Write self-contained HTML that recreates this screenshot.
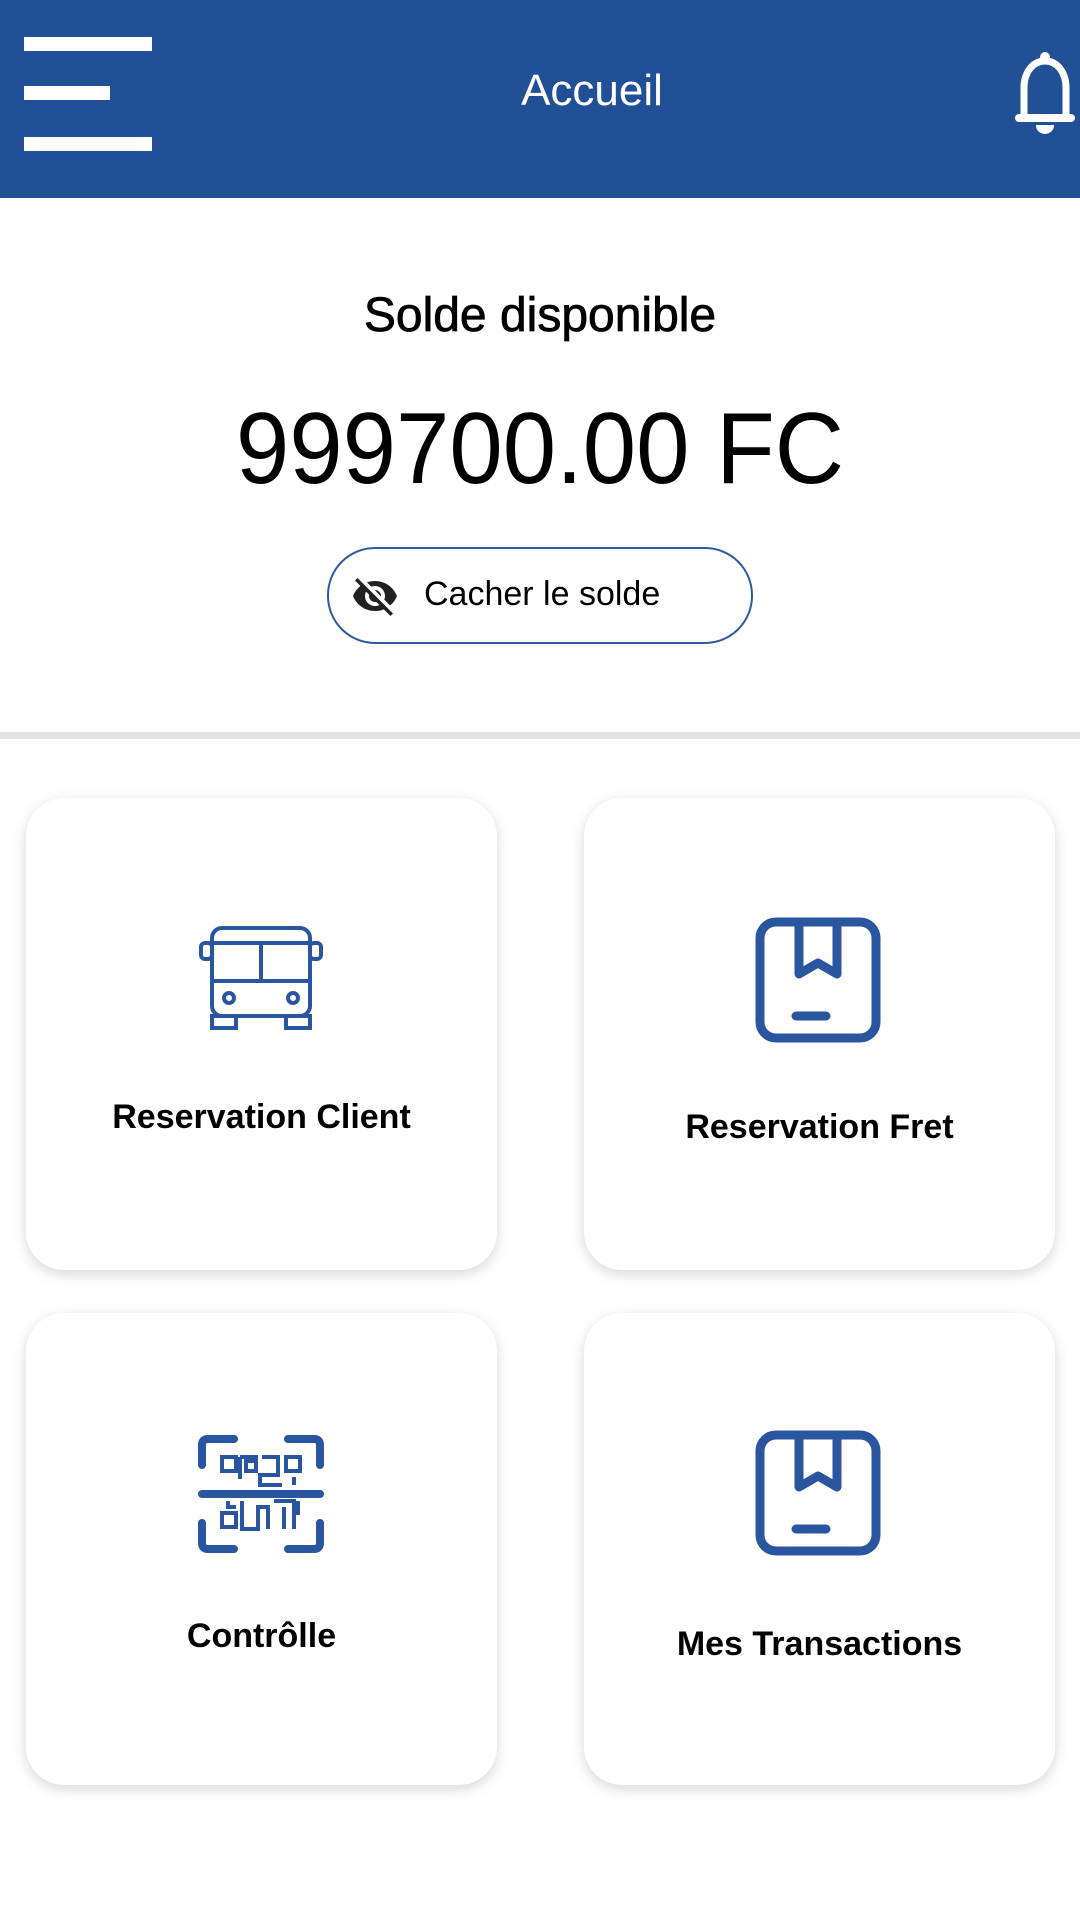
<!DOCTYPE html>
<html><head><meta charset="utf-8"><style>
*{margin:0;padding:0;box-sizing:border-box}
body{width:1080px;height:1920px;background:#fff;position:relative;overflow:hidden;font-family:"Liberation Sans",Roboto,sans-serif;color:#000}
.hdr{position:absolute;left:0;top:0;width:1080px;height:198px;background:#225096}
.bar{position:absolute;left:24px;height:14px;background:#fff}
.t{position:absolute;left:0;width:100%;text-align:center;white-space:nowrap}
.card{position:absolute;width:471px;height:472px;background:#fff;border-radius:38px;box-shadow:0 4px 14px rgba(0,0,0,0.16)}
.card .l{position:absolute;left:0;width:100%;text-align:center;font-weight:bold;font-size:34px}
.card svg{position:absolute}
</style></head><body>
<div class="hdr">
 <div class="bar" style="top:37px;width:128px"></div>
 <div class="bar" style="top:86px;width:86px"></div>
 <div class="bar" style="top:137px;width:128px"></div>
 <div class="t" style="top:66px;font-size:44px;color:#fff;left:52px">Accueil</div>
 <svg style="position:absolute;left:1012px;top:50px" width="66" height="86" viewBox="0 0 66 86">
  <circle cx="33" cy="7" r="5" fill="#fff"/>
  <path d="M12 68 V38 C12 22 21 11 33 11 C45 11 54 22 54 38 V68" fill="none" stroke="#fff" stroke-width="7"/>
  <rect x="3" y="64" width="60" height="8" rx="4" fill="#fff"/>
  <path d="M24 75 H42 C42 82 36 84 33 84 C30 84 24 82 24 75Z" fill="#fff"/>
 </svg>
</div>
<div class="t" style="top:288px;font-size:48px;-webkit-text-stroke:0.8px #000">Solde disponible</div>
<div class="t" style="top:392px;font-size:101px;transform:scaleX(0.95)">999700.00 FC</div>
<div style="position:absolute;left:327px;top:547px;width:426px;height:97px;border:2px solid #2e5aa0;border-radius:48px"></div>
<svg style="position:absolute;left:351px;top:572px" width="48" height="48" viewBox="0 0 24 24"><path fill="#222" d="M12 7c2.76 0 5 2.24 5 5 0 .65-.13 1.26-.36 1.830l2.92 2.92c1.51-1.26 2.7-2.89 3.43-4.75-1.730-4.39-6-7.5-11-7.5-1.4 0-2.74.25-3.98.7l2.16 2.16C10.74 7.13 11.35 7 12 7zM2 4.27l2.28 2.28.46.46C3.08 8.3 1.78 10.02 1 12c1.73 4.39 6 7.5 11 7.5 1.55 0 3.03-.3 4.38-.84l.42.42L19.73 22 21 20.73 3.27 3 2 4.270zM7.53 9.8l1.55 1.55c-.05.21-.08.43-.08.65 0 1.66 1.34 3 3 3 .22 0 .44-.03.65-.08l1.55 1.55c-.67.33-1.41.53-2.2.53-2.76 0-5-2.24-5-5 0-.79.2-1.53.53-2.2zm4.31-.78l3.15 3.15.02-.16c0-1.66-1.34-3-3-3l-.17.01z"/></svg>
<div style="position:absolute;left:424px;top:575px;font-size:34px">Cacher le solde</div>
<div style="position:absolute;left:0;top:732px;width:1080px;height:7px;background:#e3e3e3"></div>

<div class="card" style="left:26px;top:798px">
 <svg style="left:172px;top:127px" width="126" height="108" viewBox="0 0 126 108" fill="none" stroke="#2a56a0" stroke-width="4">
  <rect x="14" y="3" width="98" height="88" rx="10"/>
  <line x1="14" y1="56" x2="112" y2="56"/><line x1="14" y1="18" x2="112" y2="18"/>
  <line x1="63" y1="18" x2="63" y2="56"/>
  <rect x="3" y="18" width="11" height="16" rx="4"/><rect x="112" y="18" width="11" height="16" rx="4"/>
  <circle cx="31" cy="73" r="5"/><circle cx="95" cy="73" r="5"/>
  <rect x="14" y="91" width="24" height="12"/><rect x="88" y="91" width="24" height="12"/>
 </svg>
 <div class="l" style="top:300px">Reservation Client</div>
</div>
<div class="card" style="left:584px;top:798px">
 <svg style="left:170px;top:118px" width="128" height="128" viewBox="0 0 128 128" fill="none" stroke="#2a56a0" stroke-width="9" stroke-linecap="round" stroke-linejoin="round">
  <rect x="6" y="6" width="116" height="116" rx="16"/>
  <path d="M45 6 V58 L64 47 L83 58 V6"/>
  <line x1="42" y1="100" x2="72" y2="100"/>
 </svg>
 <div class="l" style="top:310px">Reservation Fret</div>
</div>
<div class="card" style="left:26px;top:1313px">
 <svg style="left:172px;top:122px" width="126" height="118" viewBox="0 0 126 118" fill="none" stroke="#2a56a0" stroke-width="8" stroke-linecap="round">
  <path d="M4 30 V10 Q4 4 10 4 H36"/><path d="M90 4 H116 Q122 4 122 10 V30"/>
  <path d="M4 88 V108 Q4 114 10 114 H36"/><path d="M90 114 H116 Q122 114 122 108 V88"/>
  <line x1="4" y1="59" x2="122" y2="59"/>
  <g stroke-width="4" stroke-linecap="butt">
   <rect x="24" y="22" width="14" height="14"/><rect x="88" y="22" width="14" height="14"/><rect x="24" y="78" width="14" height="14"/>
   <rect x="48" y="26" width="10" height="10"/><path d="M64 22 H80 V40 H62 V50 H84 M42 22 H60 M42 22 V44 M96 42 V50"/>
   <path d="M44 66 V94 H60 V72 H70 V94 M76 66 H96 V94 M86 72 V94 M30 66 V72 H38 M100 66 V80"/>
  </g>
 </svg>
 <div class="l" style="top:304px">Contrôlle</div>
</div>
<div class="card" style="left:584px;top:1313px">
 <svg style="left:170px;top:116px" width="128" height="128" viewBox="0 0 128 128" fill="none" stroke="#2a56a0" stroke-width="9" stroke-linecap="round" stroke-linejoin="round">
  <rect x="6" y="6" width="116" height="116" rx="16"/>
  <path d="M45 6 V58 L64 47 L83 58 V6"/>
  <line x1="42" y1="100" x2="72" y2="100"/>
 </svg>
 <div class="l" style="top:312px">Mes Transactions</div>
</div>
</body></html>
